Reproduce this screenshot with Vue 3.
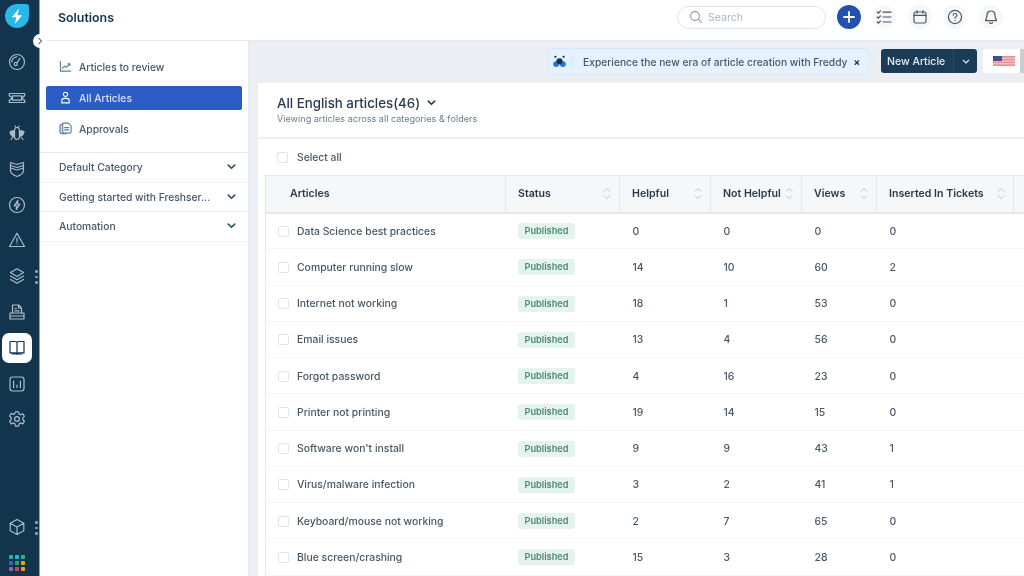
<script setup>
const railTop = ['gauge', 'ticket', 'bug', 'shield', 'bolt', 'alert', 'layers']
const railBottom = ['drive', 'book', 'chart', 'gear']

const navItems = [
  { label: 'Articles to review', icon: 'trend' },
  { label: 'All Articles', icon: 'person', active: true },
  { label: 'Approvals', icon: 'copies' }
]
const categories = ['Default Category', 'Getting started with Freshser...', 'Automation']

const columns = ['Status', 'Helpful', 'Not Helpful', 'Views', 'Inserted In Tickets']
const rows = [
  ['Data Science best practices', 0, 0, 0, 0],
  ['Computer running slow', 14, 10, 60, 2],
  ['Internet not working', 18, 1, 53, 0],
  ['Email issues', 13, 4, 56, 0],
  ['Forgot password', 4, 16, 23, 0],
  ['Printer not printing', 19, 14, 15, 0],
  ["Software won't install", 9, 9, 43, 1],
  ['Virus/malware infection', 3, 2, 41, 1],
  ['Keyboard/mouse not working', 2, 7, 65, 0],
  ['Blue screen/crashing', 15, 3, 28, 0]
]
const dots = ['#2bb5a0', '#2bb3d8', '#2eb67d', '#2a6fb5', '#25a86b', '#e8a317', '#a05bb5', '#e0453a', '#e8a317']
</script>

<template>
  <div class="app">
    <aside class="rail">
      <div class="logo">
        <svg width="24" height="24" viewBox="0 0 24 24"><path d="M14 4.500 6.800 13.200h4.500L9.800 20l7.400-8.800h-4.700z" fill="#fff" /></svg>
      </div>
      <span class="collapse">
        <svg width="6" height="8" viewBox="0 0 6 8"><path d="M1.500 1 4.500 4 1.500 7" fill="none" stroke="#12344d" stroke-width="1" /></svg>
      </span>
      <div class="railGroup">
        <span v-for="name in railTop" :key="name" class="railIcon">
          <svg width="20" height="20" viewBox="0 0 20 20" fill="none" stroke="#a9bccb" stroke-width="1.200" stroke-linejoin="round" stroke-linecap="round">
            <template v-if="name === 'gauge'">
              <circle cx="10" cy="10" r="7.500" />
              <circle cx="8.800" cy="12" r="1.600" />
              <path d="M10 10.600 13 6.400M4.800 10A5.200 5.200 0 0 1 10 4.800" />
            </template>
            <template v-else-if="name === 'ticket'">
              <path d="M2.300 5.500h15.400v2.400a2.100 2.100 0 0 0 0 4.200v2.400H2.300v-2.400a2.100 2.100 0 0 0 0-4.200z" />
              <path d="M5.500 7.800h9v4.400h-9z" />
            </template>
            <template v-else-if="name === 'bug'">
              <path d="M3 9c1.500-1.200 3-1.400 4.500-.8v5.300C5.500 14 3.500 12 3 9zM17 9c-1.500-1.200-3-1.400-4.500-.8v5.300c2-.5 4-2.500 4.500-4.500z" fill="#a9bccb" />
              <path d="M7.500 7.500C7.700 5.500 8.600 4.500 10 4.500s2.300 1 2.500 3M7.500 8v5.500c0 1.500 1 3 2.500 3s2.500-1.500 2.500-3V8M8 3l1 1.500M12 3l-1 1.500M5.500 14.500 4 16.500M14.500 14.500l1.500 2" />
            </template>
            <template v-else-if="name === 'shield'">
              <path d="M3.500 3.500 10 5.500l6.500-2v8c0 2.800-2.800 4.600-6.500 6-3.700-1.400-6.500-3.200-6.500-6z" />
              <path d="M3.500 6.500 10 8.500l6.500-2M3.500 9 10 11l6.500-2" />
            </template>
            <template v-else-if="name === 'bolt'">
              <circle cx="10" cy="10" r="7.500" />
              <path d="M10.800 5.400 7.200 10.800h2.600l-.6 3.800 3.600-5.400h-2.600z" />
            </template>
            <template v-else-if="name === 'alert'">
              <path d="M10 3.200 17.500 16.500h-15z" />
              <path d="M10 8v4M10 14v.1" />
            </template>
            <template v-else>
              <path d="M10 2.800 16.500 6.600 10 10.400 3.500 6.600z" />
              <path d="M3.500 10 10 13.800 16.500 10M3.500 13.400 10 17.200l6.500-3.800" />
            </template>
          </svg>
        </span>
      </div>
      <span class="railDots first"><i></i><i></i><i></i></span>
      <div class="railGroup second">
        <span v-for="name in railBottom" :key="name" class="railIcon" :class="{ railActive: name === 'book' }">
          <svg width="20" height="20" viewBox="0 0 20 20" fill="none" :stroke="name === 'book' ? '#12344d' : '#a9bccb'" stroke-width="1.200" stroke-linejoin="round" stroke-linecap="round">
            <template v-if="name === 'drive'">
              <path d="M5.500 11V3h6.200l2.800 2.800V11M11.500 3v3h3M7.800 6.500h1.800M7.800 8.800h4.400" />
              <path d="M3 11h14v6H3zM3 14h14" />
            </template>
            <template v-else-if="name === 'book'">
              <path d="M3 3.500h5.500c.8 0 1.500.6 1.500 1.400 0-.8.7-1.400 1.500-1.400H17v11.400h-5.500c-.8 0-1.500.6-1.500 1.300 0-.7-.7-1.300-1.500-1.300H3zM10 5v11" />
              <path d="M5 15.800h10" />
            </template>
            <template v-else-if="name === 'chart'">
              <rect x="3" y="3" width="14" height="14" rx="2.400" />
              <path d="M6.600 7v6.600M10 11.200v2.400M13.400 7v6.600" />
            </template>
            <template v-else>
              <path d="M8.400 2.800h3.200l.5 2.200 1.700.8 2-1.100 1.600 2.700-1.600 1.500v1.900l1.600 1.500-1.600 2.700-2-1.100-1.700.8-.5 2.400H8.400l-.5-2.400-1.700-.8-2 1.100-1.600-2.700 1.600-1.500V8.500L2.600 7l1.600-2.700 2 1.100 1.700-.8z" />
              <circle cx="10" cy="10" r="2.400" />
            </template>
          </svg>
        </span>
      </div>
      <div class="railFoot">
        <span class="railIcon">
          <svg width="20" height="20" viewBox="0 0 20 20" fill="none" stroke="#a9bccb" stroke-width="1.200" stroke-linejoin="round">
            <path d="M10 2.500 16.800 6.200v7.600L10 17.500l-6.800-3.700V6.200zM3.200 6.200 10 10l6.800-3.800M10 10v7.500" />
          </svg>
        </span>
        <span class="railDots last"><i></i><i></i><i></i></span>
        <div class="apps">
          <i v-for="(color, i) in dots" :key="i" :style="{ background: color }"></i>
        </div>
      </div>
    </aside>

    <div class="page">
      <header class="topbar">
        <h1>Solutions</h1>
        <div class="search">
          <svg width="14" height="14" viewBox="0 0 14 14" fill="none" stroke="#8a99a8" stroke-width="1.100"><circle cx="6" cy="6" r="4.400" /><path d="m9.400 9.400 3 3" stroke-linecap="round" /></svg>
          <span>Search</span>
        </div>
        <button class="plus">
          <svg width="12" height="12" viewBox="0 0 12 12"><path d="M6 1v10M1 6h10" stroke="#fff" stroke-width="1.800" stroke-linecap="round" /></svg>
        </button>
        <span class="roundBtn">
          <svg width="16" height="16" viewBox="0 0 16 16" fill="none" stroke="#475867" stroke-width="1.200" stroke-linecap="round"><path d="M1.200 3 2.400 4.200 4.400 2M1.200 8l1.200 1.200L4.400 7M1.200 13l1.200 1.200L4.400 12M7 3.200h8M7 8h8M7 13h8" /></svg>
        </span>
        <span class="roundBtn">
          <svg width="16" height="16" viewBox="0 0 16 16" fill="none" stroke="#475867" stroke-width="1.200" stroke-linecap="round"><rect x="2" y="3" width="12" height="11" rx="1.800" /><path d="M2 6.400h12M5 1.600v2.600M11 1.600v2.600" /></svg>
        </span>
        <span class="roundBtn">
          <svg width="16" height="16" viewBox="0 0 16 16" fill="none" stroke="#475867" stroke-width="1.200" stroke-linecap="round"><circle cx="8" cy="8" r="6.600" /><path d="M6.200 6.200C6.300 5.100 7 4.500 8 4.500s1.900.7 1.900 1.700c0 1.400-1.900 1.500-1.900 3M8 11.300v.1" /></svg>
        </span>
        <span class="roundBtn">
          <svg width="16" height="16" viewBox="0 0 16 16" fill="none" stroke="#475867" stroke-width="1.200" stroke-linecap="round" stroke-linejoin="round"><path d="M8 2C5.500 2 4 3.900 4 6.300c0 3-1.500 4.600-1.500 5.300h11c0-.7-1.500-2.300-1.500-5.300C12 3.900 10.500 2 8 2zM6.500 13.600c.3.600.8.900 1.500.9s1.200-.3 1.500-.9" /></svg>
        </span>
      </header>

      <div class="body">
        <nav class="side">
          <div class="sideNav">
            <a v-for="item in navItems" :key="item.label" class="navItem" :class="{ on: item.active }">
              <svg width="13" height="13" viewBox="0 0 14 14" fill="none" :stroke="item.active ? '#fff' : '#5f7d96'" stroke-width="1.200" stroke-linecap="round" stroke-linejoin="round">
                <path v-if="item.icon === 'trend'" d="M1.500 1.500V12h11M3.500 9 6 6.500 8 8l3.500-4M9.800 4h1.900v1.800" />
                <template v-else-if="item.icon === 'person'">
                  <circle cx="7" cy="3.600" r="2.300" />
                  <path d="M3 12.800v-2.300C3 9 4.200 7.900 5.600 7.900h2.800c1.400 0 2.600 1.100 2.600 2.600v2.300z" />
                </template>
                <template v-else>
                  <rect x="1" y="2.500" width="8" height="10" rx="2" fill="#cfdbe6" />
                  <path d="M4 1.200h6l3 3v6.300a1.500 1.500 0 0 1-1.500 1.500h-6A1.500 1.500 0 0 1 4 10.500zM6 6h4.500M6 8.500h4.500" fill="#fff" />
                </template>
              </svg>
              <span>{{ item.label }}</span>
            </a>
          </div>
          <div v-for="cat in categories" :key="cat" class="cat">
            <span>{{ cat }}</span>
            <svg width="9" height="6" viewBox="0 0 10 7"><path d="M1.200 1.300 5 5l3.800-3.700" fill="none" stroke="#284b63" stroke-width="1.800" stroke-linecap="round" /></svg>
          </div>
        </nav>

        <main class="main">
          <div class="actions">
            <div class="promo">
              <svg width="13" height="13" viewBox="0 0 14 14">
                <circle cx="3.400" cy="9.800" r="3.200" fill="#2c6fd6" />
                <circle cx="10.600" cy="9.800" r="3.200" fill="#2c6fd6" />
                <circle cx="7" cy="6.800" r="3.300" fill="#12344d" />
                <circle cx="2.600" cy="2" r="1.200" fill="#12344d" />
                <circle cx="11.400" cy="2" r="1.200" fill="#12344d" />
              </svg>
              <i class="promoRule"></i>
              <span>Experience the new era of article creation with Freddy</span>
              <span class="promoClose">×</span>
            </div>
            <div class="newBtn">
              <span>New Article</span>
              <i>
                <svg width="8" height="5" viewBox="0 0 8 5"><path d="M1 1 4 4l3-3" fill="none" stroke="#e5edf3" stroke-width="1.200" /></svg>
              </i>
            </div>
            <div class="lang">
              <svg width="22" height="10" viewBox="0 0 22 10">
                <rect width="22" height="10" fill="#e58f94" />
                <path d="M0 2.200h22M0 5h22M0 7.800h22" stroke="#f3d5d7" stroke-width="1" />
                <rect width="9" height="5" fill="#45508f" />
              </svg>
            </div>
          </div>

          <section class="card">
            <div class="cardHead">
              <div class="cardTitle">
                <h2>All English articles(46)</h2>
                <svg width="9" height="6" viewBox="0 0 10 7"><path d="M1.200 1.300 5 5l3.800-3.700" fill="none" stroke="#12344d" stroke-width="1.700" stroke-linecap="round" /></svg>
              </div>
              <p>Viewing articles across all categories &amp; folders</p>
            </div>
            <label class="selectAll"><i class="check"></i>Select all</label>
            <table class="grid">
              <colgroup>
                <col style="width: 240px" />
                <col style="width: 114px" />
                <col style="width: 91px" />
                <col style="width: 91px" />
                <col style="width: 75px" />
                <col style="width: 137px" />
                <col />
              </colgroup>
              <thead>
                <tr>
                  <th class="first">Articles</th>
                  <th v-for="col in columns" :key="col">
                    <div class="thIn">
                      <span>{{ col }}</span>
                      <svg width="8" height="13" viewBox="0 0 8 13" fill="none" stroke="#b6c2cd" stroke-width="1"><path d="M1 4.500 4 1.500l3 3M1 8.500l3 3 3-3" /></svg>
                    </div>
                  </th>
                  <th></th>
                </tr>
              </thead>
              <tbody>
                <tr v-for="row in rows" :key="row[0]">
                  <td class="name"><div><i class="check"></i>{{ row[0] }}</div></td>
                  <td class="status"><span class="tag">Published</span></td>
                  <td v-for="(n, i) in row.slice(1)" :key="i">{{ n }}</td>
                  <td></td>
                </tr>
              </tbody>
            </table>
          </section>
        </main>
      </div>
    </div>
  </div>
</template>

<style scoped>
.app {
  display: flex;
  width: 1024px;
  height: 576px;
  overflow: hidden;
  font-family: Inter, "Liberation Sans", sans-serif;
  color: #475867;
  filter: blur(0.35px);
}
.rail {
  position: relative;
  flex: none;
  width: 40px;
  height: 576px;
  background: #12344d;
  display: flex;
  flex-direction: column;
  align-items: center;
  border-right: 1px solid #8fa3b3;
  box-sizing: border-box;
}
.logo {
  width: 24px;
  height: 24px;
  margin: 4px 0 0 -5px;
  background: #29b6e8;
  border-radius: 12px 3px 12px 12px;
  display: flex;
  align-items: center;
  justify-content: center;
}
.collapse {
  position: absolute;
  left: 33px;
  top: 34px;
  width: 14px;
  height: 14px;
  border-radius: 50%;
  background: #fff;
  display: flex;
  align-items: center;
  justify-content: center;
}
.railGroup {
  display: flex;
  flex-direction: column;
  gap: 15.67px;
  margin-top: 24px;
  margin-left: -5px;
}
.railGroup.second {
  margin-top: 16px;
  gap: 0;
  align-items: center;
}
.railIcon {
  width: 20px;
  height: 20px;
  display: block;
}
.railGroup.second .railIcon {
  margin-top: 15px;
}
.railGroup.second .railIcon:first-child {
  margin-top: 0;
}
.railGroup.second .railActive {
  width: 30px;
  height: 30px;
  margin-top: 11px;
  margin-bottom: -4px;
  background: #fff;
  border-radius: 7px;
  display: flex;
  align-items: center;
  justify-content: center;
}
.railDots {
  position: absolute;
  left: 35px;
  display: flex;
  flex-direction: column;
  gap: 3px;
}
.railDots.first {
  top: 270px;
}
.railDots.last {
  top: 521px;
}
.railDots i {
  width: 2.5px;
  height: 2.5px;
  border-radius: 50%;
  background: #8fa3b3;
}
.railFoot {
  margin-top: auto;
  margin-left: -5px;
  display: flex;
  flex-direction: column;
  align-items: center;
  padding-bottom: 5px;
}
.apps {
  display: grid;
  grid-template-columns: repeat(3, 4px);
  gap: 2px;
  margin-top: 18px;
}
.apps i {
  width: 4px;
  height: 4px;
  border-radius: 1px;
}
.page {
  flex: 1;
  min-width: 0;
  display: flex;
  flex-direction: column;
}
.topbar {
  flex: none;
  height: 41px;
  box-sizing: border-box;
  background: #fff;
  border-bottom: 1px solid #e3e8ed;
  display: flex;
  align-items: center;
  padding: 0 21px 6px 18px;
}
.topbar h1 {
  margin: 0 auto 0 0;
  font-size: 12.4px;
  font-weight: 600;
  color: #12344d;
}
.search {
  width: 149px;
  height: 23px;
  box-sizing: border-box;
  border: 1px solid #dfe5ec;
  border-radius: 12px;
  padding-left: 11px;
  display: flex;
  align-items: center;
  gap: 5px;
  font-size: 10.5px;
  color: #a9b5c0;
}
.plus {
  width: 24px;
  height: 24px;
  margin: 0 -0.67px 0 11px;
  padding: 0;
  border: none;
  border-radius: 50%;
  background: #2351ad;
  display: flex;
  align-items: center;
  justify-content: center;
}
.roundBtn {
  width: 24px;
  height: 24px;
  margin-left: 11.67px;
  border-radius: 50%;
  background: #f5f7f9;
  display: flex;
  align-items: center;
  justify-content: center;
}
.body {
  flex: 1;
  min-height: 0;
  display: flex;
}
.side {
  flex: none;
  width: 209px;
  box-sizing: border-box;
  background: #fff;
  border-right: 1px solid #e3e8ed;
}
.sideNav {
  padding: 14px 6px 11px;
  display: flex;
  flex-direction: column;
  gap: 7px;
  border-bottom: 1px solid #e3e8ed;
}
.navItem {
  height: 24px;
  box-sizing: border-box;
  padding: 0 0 1px 13px;
  display: flex;
  align-items: center;
  gap: 7px;
  border-radius: 2px;
  font-size: 10.3px;
  font-weight: 500;
  color: #475867;
}
.navItem.on {
  background: #2c5cc5;
  color: #d7e0f2;
}
.cat {
  height: 29.5px;
  box-sizing: border-box;
  padding: 0 12px 0 19px;
  display: flex;
  align-items: center;
  justify-content: space-between;
  font-size: 10.3px;
  font-weight: 500;
  color: #475867;
  border-bottom: 1px solid #f2f3f0;
}
.main {
  flex: 1;
  min-width: 0;
  background: #ebeff3;
  display: flex;
  flex-direction: column;
  overflow: hidden;
}
.actions {
  flex: none;
  height: 42px;
  display: flex;
  align-items: flex-start;
  padding-top: 7px;
  box-sizing: border-box;
  margin-left: 299px;
  white-space: nowrap;
}
.promo {
  position: relative;
  width: 321px;
  height: 27px;
  flex: none;
  box-sizing: border-box;
  background: #e5f2fd;
  border: 1px solid #d5e8f9;
  border-radius: 3px;
  display: flex;
  align-items: center;
  padding-left: 4px;
  font-size: 10.25px;
  font-weight: 500;
  color: #475867;
}
.promo::after {
  content: "";
  position: absolute;
  right: -5px;
  top: 8px;
  width: 8px;
  height: 8px;
  background: #e5f2fd;
  border: solid #d5e8f9;
  border-width: 1px 1px 0 0;
  transform: rotate(45deg);
}
.promoRule {
  width: 1px;
  height: 17px;
  margin: 0 10px 0 6px;
  background: #d5e8f9;
}
.promoClose {
  margin-left: 6px;
  font-weight: 700;
  font-size: 10px;
  color: #12344d;
}
.newBtn {
  flex: none;
  width: 96px;
  height: 24px;
  margin-left: 12px;
  margin-top: 1px;
  border-radius: 3px;
  background: #1a3c57;
  color: #e5edf3;
  font-size: 10.5px;
  font-weight: 500;
  display: flex;
  align-items: center;
  padding-left: 6px;
  box-sizing: border-box;
}
.newBtn i {
  margin-left: auto;
  width: 24px;
  height: 24px;
  border-left: 1px solid #2b4c66;
  box-sizing: border-box;
  display: flex;
  align-items: center;
  justify-content: center;
}
.lang {
  flex: none;
  width: 41px;
  height: 24px;
  margin-left: 6px;
  margin-top: 1px;
  background: #fff;
  border-right: 4px solid #c9ced3;
  border-radius: 3px 0 0 3px;
  padding-left: 10px;
  box-sizing: border-box;
  display: flex;
  align-items: center;
}
.card {
  flex: 1;
  margin-left: 9px;
  background: #fff;
}
.cardHead {
  height: 56px;
  box-sizing: border-box;
  padding: 12px 0 0 19px;
  border-bottom: 2px solid #eef1f4;
}
.cardTitle {
  display: flex;
  align-items: center;
  gap: 7px;
}
.cardTitle h2 {
  margin: 0;
  font-size: 13.3px;
  font-weight: 500;
  color: #283a4c;
}
.cardHead p {
  margin: 2px 0 0;
  font-size: 9.1px;
  color: #6c7b89;
}
.selectAll {
  height: 36px;
  display: flex;
  align-items: center;
  padding-left: 19px;
  font-size: 10.3px;
  font-weight: 500;
  color: #475867;
}
.selectAll .check {
  margin-right: 9px;
}
.check {
  flex: none;
  width: 9px;
  height: 9px;
  margin-right: 8px;
  border: 1px solid #e0e5ea;
  border-radius: 2px;
  background: #fff;
}
.grid {
  margin-left: 7px;
  width: 759px;
  table-layout: fixed;
  border-collapse: collapse;
}
th {
  height: 37px;
  padding: 0 0 0 12px;
  box-sizing: border-box;
  background: #f5f7f9;
  border: 1px solid #e3e8ee;
  border-width: 1px 1px 2px;
  text-align: left;
  font-size: 10.6px;
  font-weight: 600;
  color: #283a4c;
}
th.first {
  padding-left: 24px;
}
th:last-child {
  border-right: none;
}
.thIn {
  display: flex;
  align-items: center;
  justify-content: space-between;
  padding-right: 8px;
  white-space: nowrap;
}
td {
  height: 36.25px;
  padding: 1px 0 0 13px;
  box-sizing: border-box;
  border-bottom: 1px solid #f3f5f6;
  font-size: 10.4px;
  font-weight: 500;
  color: #475867;
}
td.name {
  padding-left: 12px;
  border-left: 1px solid #e3e8ee;
}
td.name div {
  display: flex;
  align-items: center;
}
td.status {
  padding-left: 12px;
}
.tag {
  display: inline-block;
  padding: 0 7px;
  height: 16px;
  line-height: 16px;
  border-radius: 3px;
  background: #e4f3ee;
  color: #4f8a6c;
  font-size: 9.2px;
  font-weight: 600;
}
</style>

<style>
html,
body {
  margin: 0;
  overflow: hidden;
}
</style>
